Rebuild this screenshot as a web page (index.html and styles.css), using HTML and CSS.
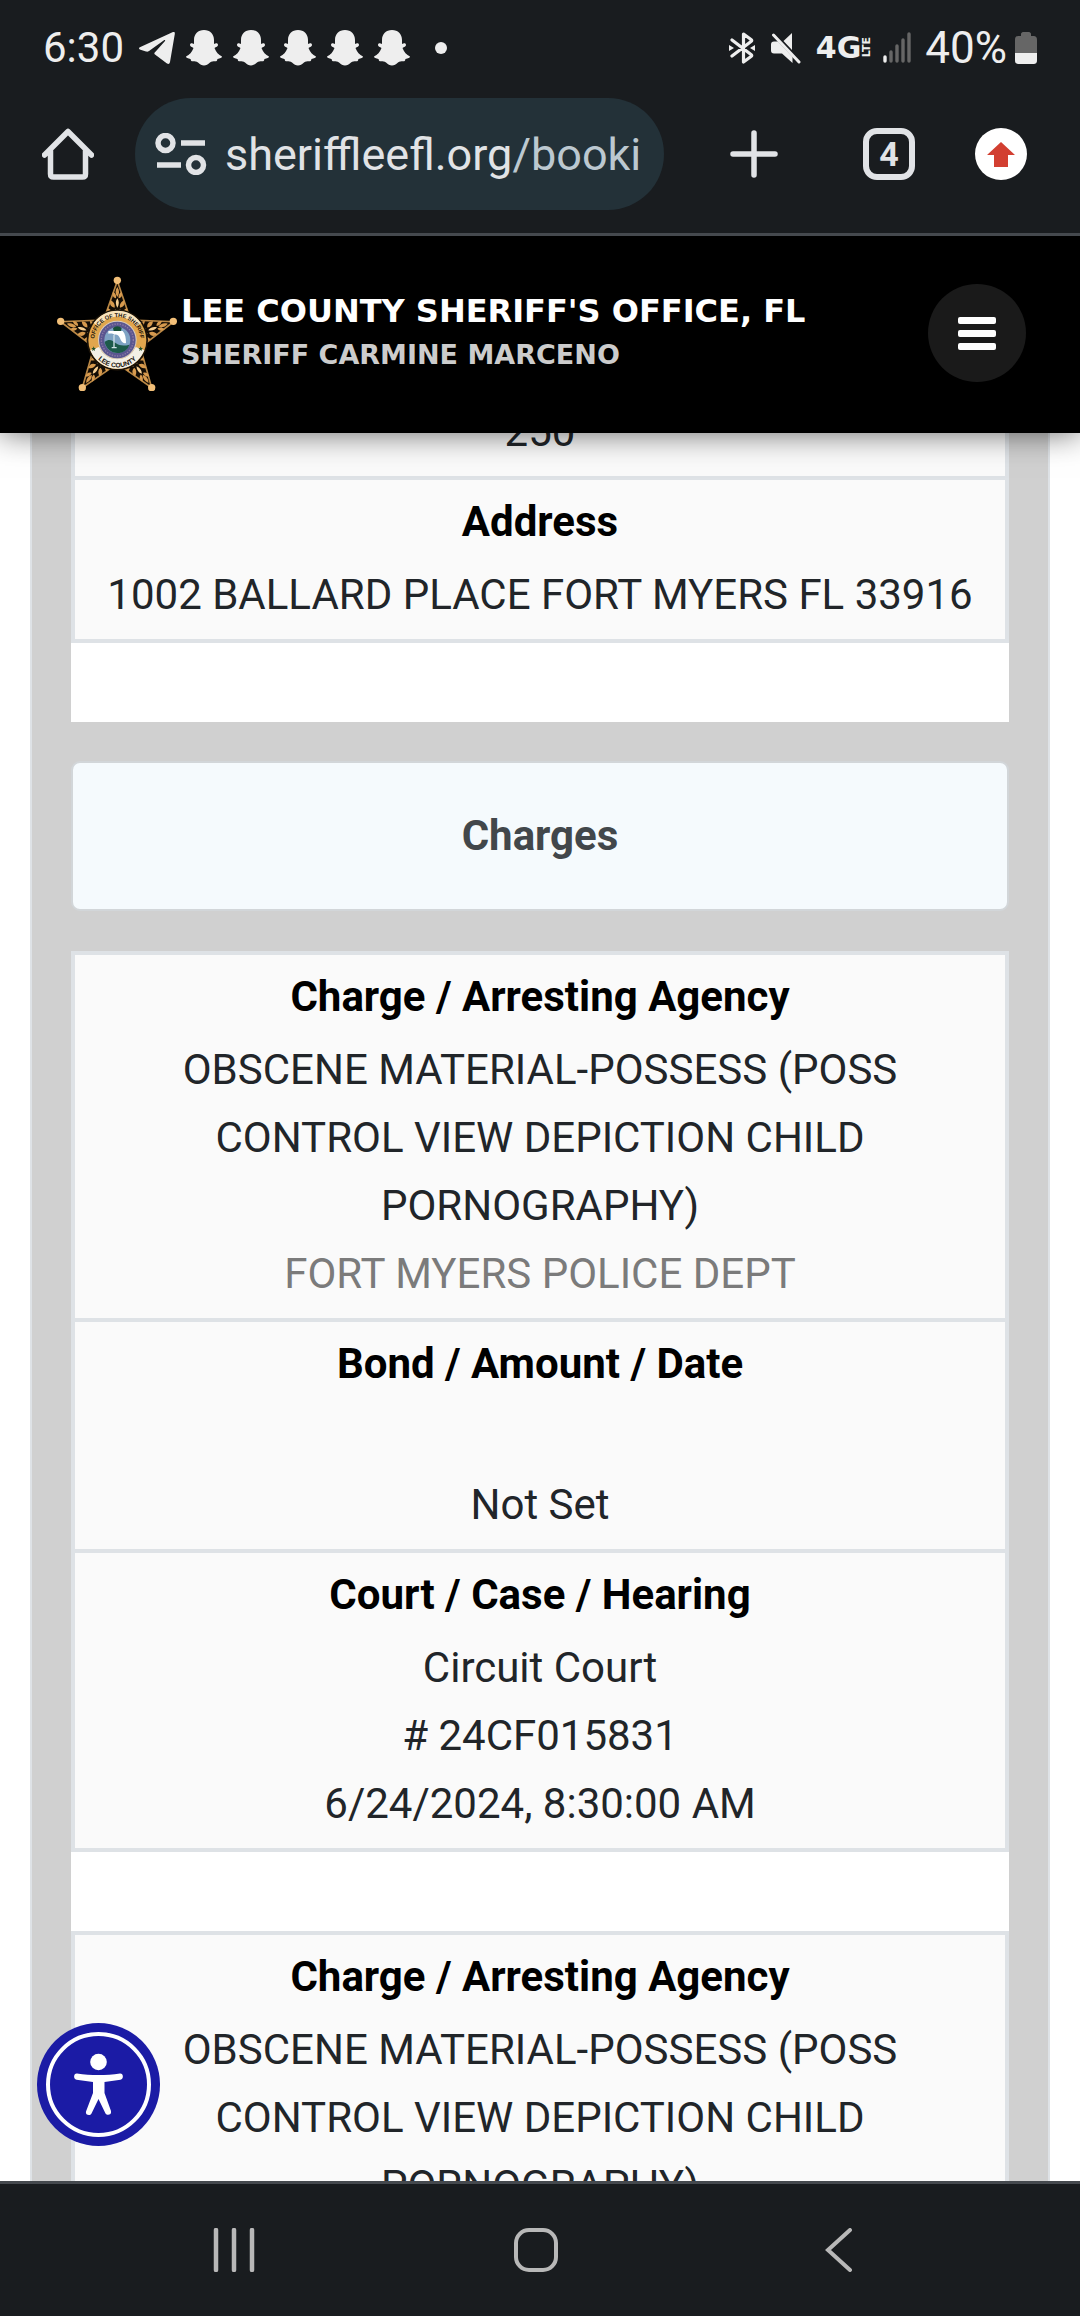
FILE: index.html
```html
<!DOCTYPE html>
<html lang="en">
<head>
  <meta charset="UTF-8">
  <meta name="viewport" content="width=device-width, initial-scale=1">
  <title>Lee County Sheriff's Office, FL</title>
  <link rel="stylesheet" href="styles.css">
</head>
<body>

<!-- shared icon shapes -->
<svg class="defs" width="0" height="0">
  <symbol id="ghost" viewBox="0 0 36 36">
    <path d="M18 0c6 0 10 4 10 10v4c2-1 4-1 4 1 0 1.500-2 2-3.500 3 1.500 4 4 7 7.500 8.500 0 1.500-2 1.700-4.500 2.500-.5 1-.3 2-1.500 2.200-2 0-4-.2-6 1.300-2 1.800-3.800 3-6 3s-4-1.200-6-3c-2-1.500-4-1.300-6-1.300-1.200-.2-1-1.200-1.500-2.200C2 28.200 0 28 0 26.500c3.500-1.500 6-4.500 7.500-8.500C6 17 4 16.500 4 15c0-2 2-2 4-1v-4C8 4 12 0 18 0z"/>
  </symbol>
  <symbol id="leaf" viewBox="-36 -60 72 120">
    <path fill="#d79a4e" d="M0-54c7 10 7 20 0 30-7-10-7-20 0-30zM-4-20c-9-2-12-10-9-20 8 5 11 12 9 20zM4-20c9-2 12-10 9-20-8 5-11 12-9 20zM-8 8c-12-2-16-10-13-22 10 4 15 12 13 22zM8 8c12-2 16-10 13-22C11-10 6-2 8 8zM-14 34C-27 31-32 22-29 9c11 5 17 14 15 25zM14 34c13-3 18-12 15-25C18 14 12 23 14 34z"/>
    <path fill="#f6cf93" d="M0-20c6 9 6 18 0 28-6-10-6-19 0-28zM-2 36c-10-6-11-14-4-24 6 7 8 15 4 24zM4 36c10-6 11-14 4-24-6 7-8 15-4 24z"/>
  </symbol>
</svg>

<header class="browser">
  <div class="status-bar">
    <span class="clock">6:30</span>
    <svg class="telegram" viewBox="0 0 36 32"><path d="M34 0c1.500-.5 2 .5 1.800 2L31 30c-.4 2-1.600 2.500-3 1.500L16 22.500c-1-.8-.8-1.500 0-2.300L26 9c.5-1-.3-1.300-1-.8L10 19c-1 .7-2 .8-3 .5l-5.500-1.800c-2-.7-2-2-.1-2.800z"/></svg>
    <svg class="ghost"><use href="#ghost"/></svg>
    <svg class="ghost"><use href="#ghost"/></svg>
    <svg class="ghost"><use href="#ghost"/></svg>
    <svg class="ghost"><use href="#ghost"/></svg>
    <svg class="ghost"><use href="#ghost"/></svg>
    <span class="more-dot"></span>

    <svg class="bluetooth" viewBox="0 0 26 32"><path d="M3 8l19 14.500c1 .8 1 1.200 0 2L14.500 30V2L22 7.500c1 .8 1 1.200 0 2L3 24" fill="none" stroke="#eee" stroke-width="3.200" stroke-linecap="round" stroke-linejoin="round"/><path d="M0 13l5 3-5 3zM26 13l-5 3 5 3z"/></svg>
    <svg class="mute" viewBox="0 0 30 32"><path d="M21 1v17L12.500 9zM7 9.500L21.500 25v6L11 21.500H3c-2 0-3-1-3-3v-6c0-2 1-3 3-3z"/><path d="M2.500 3L28 30" stroke="#eee" stroke-width="3" stroke-linecap="round"/></svg>
    <span class="network">4G<small>LTE</small></span>
    <svg class="signal" viewBox="0 0 28 31"><g stroke="#666" stroke-width="3.400" stroke-linecap="round"><path d="M2 25v4" stroke="#eee"/><path d="M8 20v9M14 14v15M20 8v21M26 2v27"/></g></svg>
    <span class="battery-text">40%</span>
    <svg class="battery" viewBox="0 0 22 32"><path fill="#666" d="M6 2c0-1 1-2 2-2h6c1 0 2 1 2 2v2h2c3 0 4 1 4 4v14H0V8c0-3 1-4 4-4h2z"/><path d="M0 21h22v7c0 3-1 4-4 4H4c-3 0-4-1-4-4z"/></svg>
  </div>

  <div class="toolbar">
    <button class="icon-btn" aria-label="Home">
      <svg viewBox="0 0 52 52"><path d="M2.500 27L26 3.500 49.500 27M8.500 23v23c0 2 1 3 3 3h29c2 0 3-1 3-3V23" fill="none" stroke="#e1e3e6" stroke-width="5.500" stroke-linecap="round" stroke-linejoin="round"/></svg>
    </button>
    <div class="address">
      <svg viewBox="0 0 52 42"><g fill="none" stroke="#e1e3e6" stroke-width="5.500"><circle cx="10.500" cy="10" r="7.500"/><circle cx="41" cy="32" r="7.500"/><path d="M26 10h24M2 32h24"/></g></svg>
      <a class="url" href="#">sheriffleefl.org<span>/booki</span></a>
    </div>
    <button class="icon-btn new-tab" aria-label="New tab">
      <svg viewBox="0 0 52 52"><path d="M26 5v42M5 26h42" stroke="#e1e3e6" stroke-width="5.500" stroke-linecap="round"/></svg>
    </button>
    <button class="icon-btn tabs" aria-label="Open tabs">4</button>
    <button class="icon-btn update" aria-label="Update available">
      <svg viewBox="0 0 52 52"><circle cx="26" cy="26" r="26" fill="#fff"/><path fill="#d23f31" d="M26 14l14 13h-7v12H19V27h-7z"/></svg>
    </button>
  </div>
</header>

<div class="page">
  <div class="site-header">
    <svg class="badge" viewBox="50 45 360 345">
      <path d="M231 60l40 117 129 5-100 77 34 121-103-72-105 72 35-121L61 182l129-5z" fill="#140d05" stroke="#b98745" stroke-width="5"/>
      <g>
        <use href="#leaf" x="-36" y="-60" width="72" height="120" transform="translate(231 132)"/>
        <use href="#leaf" x="-36" y="-60" width="72" height="120" transform="translate(331 205) rotate(72)"/>
        <use href="#leaf" x="-36" y="-60" width="72" height="120" transform="translate(293 322) rotate(144)"/>
        <use href="#leaf" x="-36" y="-60" width="72" height="120" transform="translate(169 322) rotate(216)"/>
        <use href="#leaf" x="-36" y="-60" width="72" height="120" transform="translate(131 205) rotate(288)"/>
      </g>
      <g fill="#f2bf78">
        <circle cx="231" cy="58" r="11"/>
        <circle cx="61" cy="181" r="11"/>
        <circle cx="399" cy="181" r="11"/>
        <circle cx="126" cy="380" r="11"/>
        <circle cx="334" cy="380" r="11"/>
      </g>
      <circle cx="231" cy="237" r="92" fill="#1a1208"/>
      <circle cx="231" cy="237" r="87" fill="#e2a64d"/>
      <path d="M150 268a87 87 0 0 0 162 0l-26-10a60 60 0 0 1-110 0z" fill="#f4f0e6"/>
      <path d="M160 186a87 87 0 0 1 142 0l-14 10a70 70 0 0 0-114 0z" fill="#f8e3bd"/>
      <circle cx="231" cy="237" r="58" fill="#d9cdbd"/>
      <circle cx="231" cy="237" r="55" fill="#5a568f"/>
      <circle cx="231" cy="237" r="48" fill="none" stroke="#8d7aa6" stroke-width="4" stroke-dasharray="4 4"/>
      <circle cx="231" cy="237" r="39" fill="#7fa3c4"/>
      <path d="M193 243c14-12 24-4 34 4s26 8 40 4c-4 15-18 25-36 25s-34-13-38-33z" fill="#1d5a4a"/>
      <path d="M218 202c6-8 20-8 26 0l-3 11h-20z" fill="#175038"/>
      <path d="M204 210h43c8 8 10 22 10 36-8 4-14-4-18-14-3-8-8-12-16-11-6-5-14-4-19-3z" fill="#fff"/>
      <path d="M221 222v36M214 260h15" stroke="#cfe0e6" stroke-width="4"/>
      <path id="arcTop" d="M164 254a69 69 0 1 1 134 0" fill="none"/>
      <path id="arcBottom" d="M152 256a81 81 0 0 0 158 0" fill="none"/>
      <text class="badge-text" text-anchor="middle"><textPath href="#arcTop" startOffset="50%">OFFICE OF THE SHERIFF</textPath></text>
      <text class="badge-text badge-county" text-anchor="middle"><textPath href="#arcBottom" startOffset="50%">LEE COUNTY</textPath></text>
      <path fill="#24502a" d="M160 256l2 5h5l-4 4 1 5-4-3-5 3 2-5-4-4h5zM301 256l2 5h5l-4 4 1 5-4-3-5 3 2-5-4-4h5z"/>
    </svg>
    <div class="site-name">
      <h1>LEE COUNTY SHERIFF'S OFFICE, FL</h1>
      <p>SHERIFF CARMINE MARCENO</p>
    </div>
    <button class="menu-btn" aria-label="Menu"><i></i><i></i><i></i></button>
  </div>

  <main class="panel">
    <table class="info scrolled">
      <tr><td>250</td></tr>
      <tr><td><h3>Address</h3>1002 BALLARD PLACE FORT MYERS FL 33916</td></tr>
    </table>
    <div class="spacer"></div>

    <h2 class="section-title">Charges</h2>

    <table class="info">
      <tr><td><h3>Charge / Arresting Agency</h3>OBSCENE MATERIAL-POSSESS (POSS CONTROL VIEW DEPICTION CHILD PORNOGRAPHY)<div class="agency">FORT MYERS POLICE DEPT</div></td></tr>
      <tr><td><h3>Bond / Amount / Date</h3><br>Not Set</td></tr>
      <tr><td><h3>Court / Case / Hearing</h3>Circuit Court<br># 24CF015831<br>6/24/2024, 8:30:00 AM</td></tr>
    </table>
    <div class="spacer"></div>
    <table class="info">
      <tr><td><h3>Charge / Arresting Agency</h3>OBSCENE MATERIAL-POSSESS (POSS CONTROL VIEW DEPICTION CHILD PORNOGRAPHY)</td></tr>
    </table>
  </main>

  <button class="a11y-btn" aria-label="Accessibility menu">
    <svg viewBox="0 0 123 123"><circle cx="61.500" cy="61.500" r="61.500" fill="#1b1ba5"/><circle cx="61.500" cy="61.500" r="50.500" fill="none" stroke="#fff" stroke-width="4"/><circle cx="61.500" cy="39" r="8.300" fill="#fff"/><path fill="#fff" d="M40 50.500c14 2 29 2 43 0 3.500-.3 4 5.500.5 6.200L67.500 59v11l6.500 18c1 4-4 5-5.500 2.500L61.500 76l-7 14.500C53 93.500 48 92 49 88.500L56 70V59l-16.500-2.300c-3.500-.7-3-6.500.5-6.200z"/></svg>
  </button>
</div>

<nav class="system-nav">
  <button aria-label="Recent apps"><svg viewBox="0 0 44 44"><path d="M4 2v40M22 2v40M40 2v40" stroke="#b8b8b8" stroke-width="4.500" stroke-linecap="round"/></svg></button>
  <button aria-label="Home"><svg viewBox="0 0 44 44"><rect x="2" y="2" width="40" height="40" rx="13" fill="none" stroke="#b8b8b8" stroke-width="4"/></svg></button>
  <button aria-label="Back"><svg viewBox="0 0 44 44"><path d="M34 2L12 22l22 20" fill="none" stroke="#b8b8b8" stroke-width="4" stroke-linecap="round"/></svg></button>
</nav>

</body>
</html>
```

FILE: styles.css
```css
* {
  box-sizing: border-box;
}

body {
  margin: 0;
  height: 100vh;
  display: flex;
  flex-direction: column;
  overflow: hidden;
  font-family: Roboto, sans-serif;
  font-size: 42px;
  color: #212529;
  background: #fff;
}

button {
  border: none;
  padding: 0;
  background: none;
  cursor: pointer;
}

svg {
  display: block;
  flex: none;
}

.defs {
  position: absolute;
}

/* Browser chrome */
.browser {
  background: #191c1f;
  border-bottom: 3px solid #45494e;
  flex: none;
}

.status-bar {
  display: flex;
  align-items: center;
  height: 98px;
  padding: 0 43px 3px;
  color: #eee;
  fill: #eee;
}

.clock {
  font-size: 42px;
  width: 96px;
}

.telegram {
  width: 36px;
  height: 32px;
  margin-right: 11px;
}

.ghost {
  width: 36px;
  height: 36px;
  margin-right: 11px;
}

.more-dot {
  width: 12px;
  height: 12px;
  margin-left: 14px;
  margin-right: auto;
  border-radius: 50%;
  background: #eee;
}

.bluetooth {
  width: 26px;
  height: 32px;
}

.mute {
  width: 30px;
  height: 32px;
  margin-left: 16px;
}

.network {
  display: flex;
  align-items: center;
  margin-left: 15px;
  font: bold 30px "DejaVu Sans", sans-serif;
}

.network small {
  writing-mode: vertical-rl;
  transform: rotate(180deg);
  font-size: 11px;
  line-height: 12px;
}

.signal {
  width: 28px;
  height: 31px;
  margin-left: 10px;
}

.battery-text {
  font-size: 44px;
  margin-left: 14px;
}

.battery {
  width: 22px;
  height: 32px;
  margin-left: 8px;
}

.toolbar {
  display: flex;
  align-items: center;
  height: 135px;
  padding: 0 53px 23px 42px;
}

.icon-btn {
  width: 52px;
  height: 52px;
  flex: none;
}

.address {
  flex: 1;
  min-width: 0;
  display: flex;
  align-items: center;
  gap: 18px;
  height: 112px;
  margin: 0 64px 0 41px;
  padding: 0 16px 0 20px;
  border-radius: 56px;
  background: #233138;
}

.address svg {
  width: 52px;
}

.url {
  font-size: 45px;
  color: #e1e3e6;
  text-decoration: none;
  white-space: nowrap;
}

.url span {
  color: #bcc8d0;
}

.tabs {
  margin: 0 60px 0 83px;
  border: 6px solid #e1e3e6;
  border-radius: 14px;
  color: #e1e3e6;
  font: bold 34px Roboto, sans-serif;
}

/* Web page */
.page {
  position: relative;
  flex: 1;
  min-height: 0;
  overflow: hidden;
}

.site-header {
  position: relative;
  z-index: 1;
  display: flex;
  align-items: center;
  height: 197px;
  padding: 0 54px 3px 57px;
  background: #000;
  box-shadow: 0 0 30px rgba(0, 0, 0, 0.6);
}

.badge {
  width: 120px;
  height: 115px;
}

.badge-text {
  font: bold 17px "Liberation Sans", sans-serif;
  fill: #1a1208;
}

.badge-county {
  font-size: 20px;
}

.site-name {
  flex: 1;
  margin-left: 4px;
  font-family: "DejaVu Sans", sans-serif;
  font-weight: bold;
}

.site-name h1 {
  margin: 0;
  font-size: 32px;
  line-height: 44px;
  color: #fff;
}

.site-name p {
  margin: 0;
  font-size: 27px;
  line-height: 44px;
  color: #ccc;
}

.menu-btn {
  display: flex;
  flex-direction: column;
  align-items: center;
  justify-content: center;
  gap: 6px;
  width: 98px;
  height: 98px;
  border-radius: 50%;
  background: #1a1a1a;
}

.menu-btn i {
  width: 38px;
  height: 7px;
  border-radius: 2px;
  background: #fff;
}

.panel {
  margin: 0 30px;
  padding: 0 39px;
  border: solid #dee2e6;
  border-width: 0 2px;
  background: #d0d0d0;
}

.info {
  width: 100%;
  border-collapse: collapse;
  background: #fafafa;
}

/* first table is scrolled partly under the site header */
.scrolled {
  margin-top: -47px;
}

.info td {
  padding: 8px 20px 10px;
  border: 4px solid #dee2e6;
  text-align: center;
  line-height: 68px;
}

.info h3 {
  margin: 0 0 5px;
  font-size: 42px;
  font-weight: bold;
  color: #000;
}

.agency {
  color: #7b7b7b;
}

.spacer {
  height: 79px;
  background: #fff;
}

.section-title {
  margin: 39px 0 40px;
  padding: 39px 0;
  border: 2px solid #d2d6d9;
  border-radius: 9px;
  background: #f5fafd;
  font-size: 42px;
  line-height: 68px;
  text-align: center;
  color: #42474b;
}

.a11y-btn {
  position: absolute;
  left: 37px;
  bottom: 35px;
  width: 123px;
  height: 123px;
}

/* System navigation */
.system-nav {
  display: grid;
  grid-template-columns: repeat(3, 1fr);
  flex: none;
  height: 135px;
  padding: 0 91px 0 83px;
  border-top: 3px solid #45494e;
  background: #191c1f;
}

.system-nav button {
  display: grid;
  place-items: center;
}

.system-nav svg {
  width: 44px;
}
```
